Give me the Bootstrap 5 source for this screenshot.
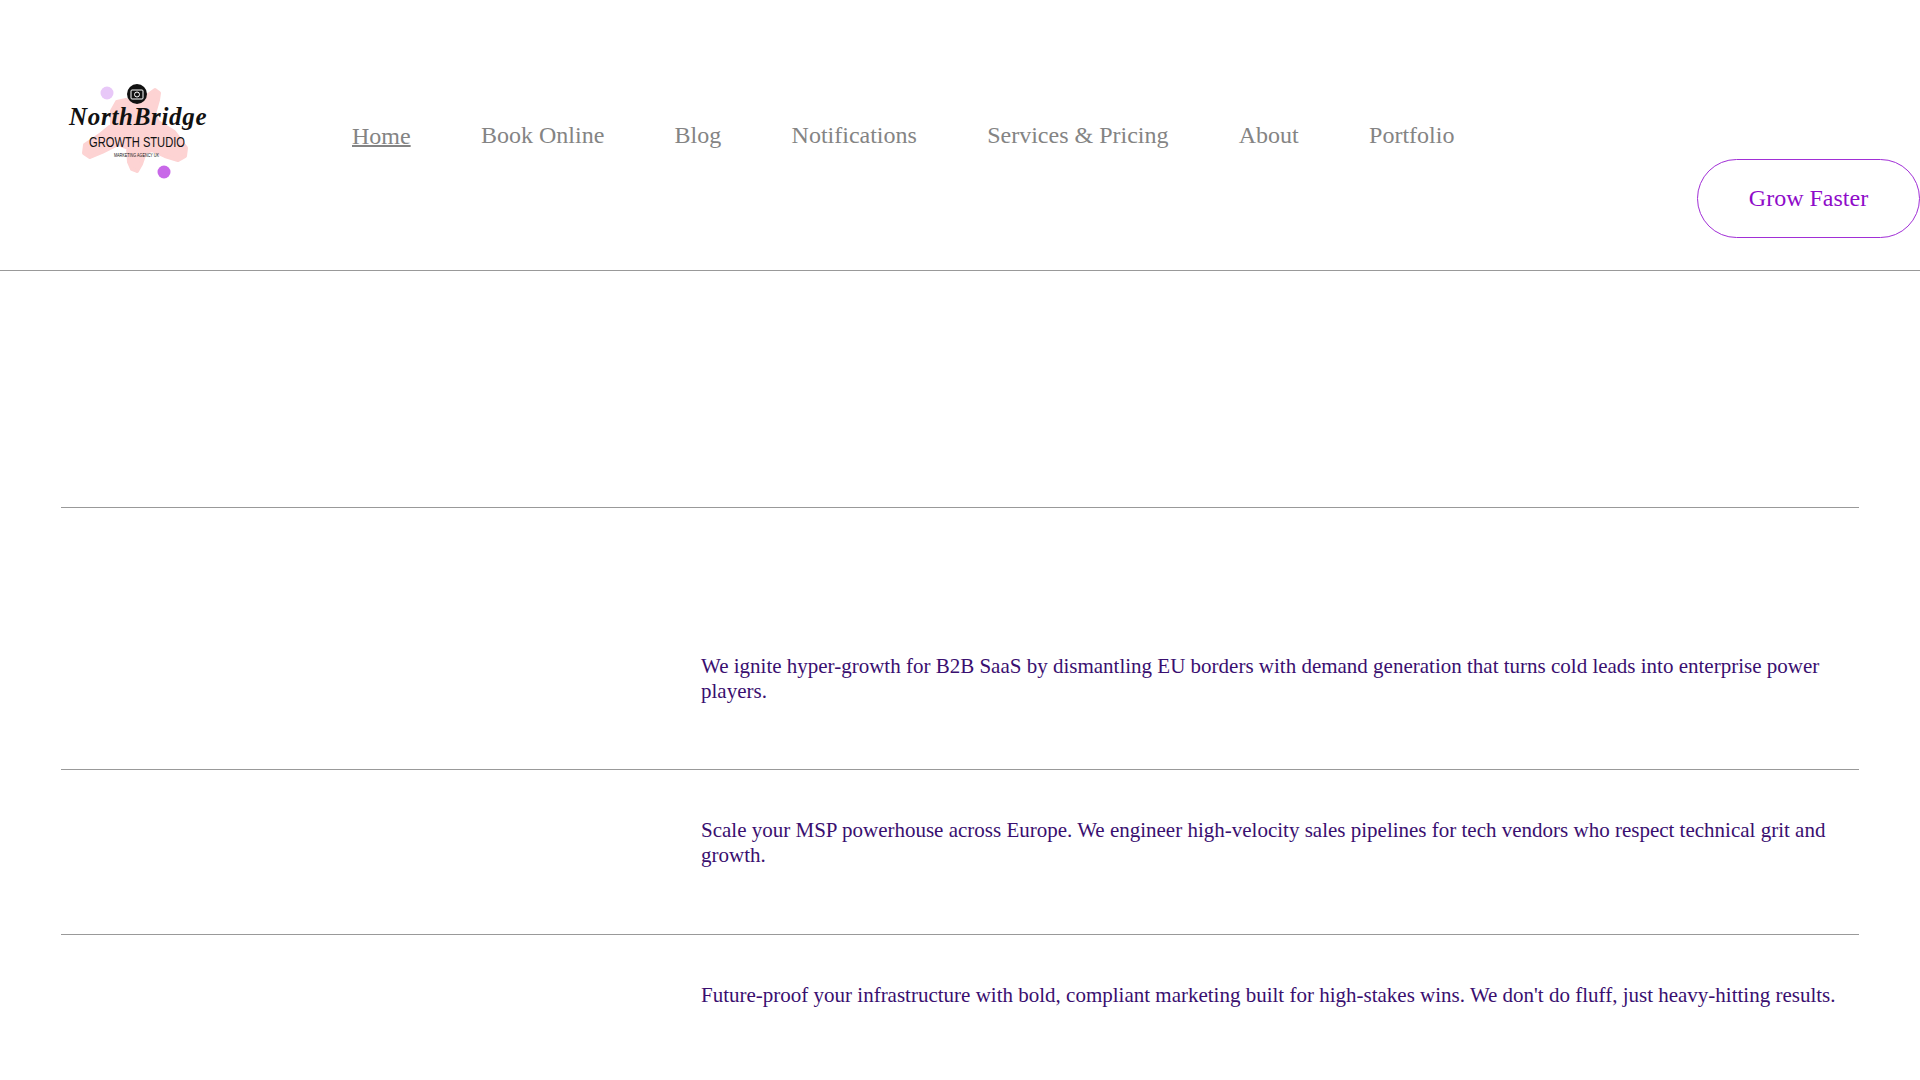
<!DOCTYPE html>
<html lang="en">
<head>
    <meta charset="UTF-8">
    <meta name="viewport" content="width=device-width, initial-scale=1.0">
    <title>NorthBridge Growth Studio</title>
    <link rel="stylesheet" href="https://cdn.jsdelivr.net/npm/bootstrap@5.3.0/dist/css/bootstrap.min.css">
    <style>
        body {
            font-family: "Liberation Serif", serif;
            background-color: #fff;
            overflow: hidden;
        }
        .site-head {
            height: 271px;
            border-bottom: 1px solid #999;
        }
        .logo-box {
            width: 352px;
            padding: 78px 0 0 60px;
        }
        .logo-box svg {
            display: block;
        }
        .menu-list {
            padding-top: 119px;
            gap: 70.3px;
        }
        .menu-list a {
            color: #848484;
            font-size: 24px;
            line-height: 32px;
            text-decoration: none;
        }
        .menu-list a.is-current {
            margin-top: 1px;
            text-decoration: underline;
            text-decoration-thickness: 2px;
        }
        .grow-btn {
            width: 223px;
            height: 79px;
            margin-top: 159px;
            padding-bottom: 2px;
            color: #8f0bc9;
            background: #fff;
            font-size: 24px;
            border: 1px solid #a12fd6;
            border-radius: 40px;
            text-decoration: none;
        }
        .service-list {
            margin: 236px 61px 0;
        }
        .service-item {
            border-top: 1px solid #999;
            padding-left: 640px;
            padding-right: 15px;
        }
        .service-item p {
            margin: 0;
            color: #3a0f70;
            font-size: 21px;
            line-height: 25.2px;
        }
        .first-item {
            height: 262px;
            padding-top: 146px;
        }
        .next-item {
            height: 165px;
            padding-top: 48px;
        }
    </style>
</head>
<body>
    <!-- Header -->
    <header class="site-head d-flex justify-content-between">
        <div class="d-flex">
            <a class="logo-box" href="#">
                <svg width="160" height="110" viewBox="0 0 160 110">
                    <path fill="#fdd3d3" stroke="#fdd3d3" stroke-width="4" stroke-linejoin="round" d="M95 12L99 15 98 22 94 36 98 44 114 54 126 70 125 78 118 82 105 78 92 72 85 74 81 86 77 93 72 91 69 84 68 70 58 66 42 74 30 79 24 75 25 67 40 57 52 47 52 33 57 24 66 22 76 28 84 20z"/>
                    <circle cx="47" cy="15" r="6.5" fill="#e8c8f8"/>
                    <circle cx="104" cy="94" r="6.5" fill="#c868e8"/>
                    <circle cx="77" cy="16" r="10" fill="#111"/>
                    <rect x="71" y="12" width="12" height="9" rx="1" fill="none" stroke="#fff"/>
                    <circle cx="77" cy="16.500" r="2.500" fill="none" stroke="#fff"/>
                    <text x="9" y="47" letter-spacing="0.7" font-family="'Liberation Serif', serif" font-style="italic" font-weight="700" font-size="25" fill="#111">NorthBridge</text>
                    <text x="29" y="69" textLength="96" lengthAdjust="spacingAndGlyphs" font-family="'Liberation Sans', sans-serif" font-size="15.500" fill="#111">GROWTH STUDIO</text>
                    <text x="54" y="79" textLength="45" lengthAdjust="spacingAndGlyphs" font-family="'Liberation Sans', sans-serif" font-size="5" fill="#111">MARKETING AGENCY UK</text>
                </svg>
            </a>
            <nav class="menu-list d-flex align-items-start">
                <a class="is-current" href="#">Home</a>
                <a href="#">Book Online</a>
                <a href="#">Blog</a>
                <a href="#">Notifications</a>
                <a href="#">Services &amp; Pricing</a>
                <a href="#">About</a>
                <a href="#">Portfolio</a>
            </nav>
        </div>
        <a class="grow-btn d-flex align-items-center justify-content-center" href="#">Grow Faster</a>
    </header>

    <!-- Services -->
    <section class="service-list">
        <div class="service-item first-item">
            <p>We ignite hyper-growth for B2B SaaS by dismantling EU borders with demand generation that turns cold leads into enterprise power players.</p>
        </div>
        <div class="service-item next-item">
            <p>Scale your MSP powerhouse across Europe. We engineer high-velocity sales pipelines for tech vendors who respect technical grit and growth.</p>
        </div>
        <div class="service-item next-item">
            <p>Future-proof your infrastructure with bold, compliant marketing built for high-stakes wins. We don't do fluff, just heavy-hitting results.</p>
        </div>
    </section>

    <script src="https://cdn.jsdelivr.net/npm/bootstrap@5.3.0/dist/js/bootstrap.bundle.min.js"></script>
</body>
</html>
